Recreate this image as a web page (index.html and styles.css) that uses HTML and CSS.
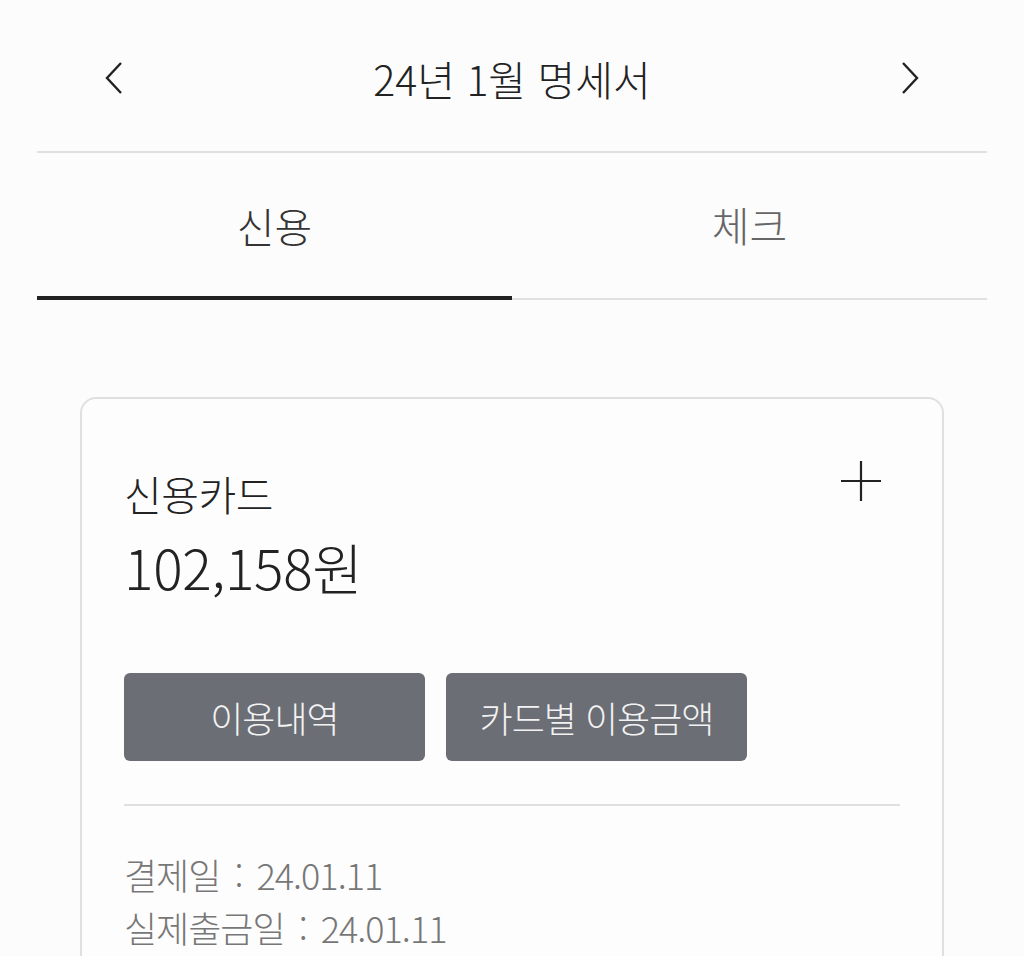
FILE: index.html
```html
<!DOCTYPE html>
<html lang="ko">
<head>
    <meta charset="UTF-8">
    <title>명세서</title>
    <link rel="stylesheet" href="styles.css">
</head>
<body>
    <div class="header">
        <button class="nav-button">
            <svg width="20" height="32" viewBox="0 0 20 32"><path d="M17 1 L3 16 L17 31" fill="none" stroke="#222" stroke-width="2.4"/></svg>
        </button>
        <h1 class="header-title">24년 1월 명세서</h1>
        <button class="nav-button">
            <svg width="20" height="32" viewBox="0 0 20 32"><path d="M3 1 L17 16 L3 31" fill="none" stroke="#222" stroke-width="2.4"/></svg>
        </button>
    </div>

    <div class="tabs">
        <div class="tab active">신용</div>
        <div class="tab">체크</div>
    </div>

    <div class="card">
        <div class="card-head">
            <div class="card-title">신용카드</div>
            <svg class="plus" width="40" height="40" viewBox="0 0 40 40"><path d="M20 0 V40 M0 20 H40" stroke="#222" stroke-width="2.2"/></svg>
        </div>
        <div class="amount">102,158원</div>

        <div class="card-buttons">
            <button class="button">이용내역</button>
            <button class="button">카드별 이용금액</button>
        </div>

        <div class="dates">
            <div>결제일 : 24.01.11</div>
            <div>실제출금일 : 24.01.11</div>
        </div>
    </div>
</body>
</html>
```

FILE: styles.css
```css
:root {
    --line-color: #e0e0e0;
    --text-color: #222222;
    --button-bg: #6b6e75;
}

body {
    margin: 0;
    padding: 0;
    font-family: "Noto Sans CJK KR", "Noto Sans", sans-serif;
    font-weight: 300;
    background-color: #fcfcfc;
    color: var(--text-color);
    overflow: hidden;
}

.header {
    margin: 0 37px;
    padding: 40px 64px 35px 64px;
    height: 76px;
    display: flex;
    align-items: center;
    justify-content: space-between;
    border-bottom: 2px solid var(--line-color);
}

.nav-button {
    width: 26px;
    height: 40px;
    padding: 0;
    border: none;
    background: none;
    display: flex;
    align-items: center;
    justify-content: center;
}

.header-title {
    font-size: 41px;
    font-weight: 300;
    margin: 0;
}

.tabs {
    margin: 0 37px;
    display: flex;
    align-items: flex-end;
    border-bottom: 2px solid var(--line-color);
}

.tab {
    flex: 1;
    height: 141px;
    display: flex;
    align-items: center;
    justify-content: center;
    font-size: 41px;
    color: #666;
    padding-bottom: 4px;
}

.tab.active {
    color: #333;
    height: 143px;
    padding-bottom: 0;
    border-bottom: 4px solid #222;
    margin-bottom: -2px;
}

.card {
    margin: 97px 80px 0 80px;
    padding: 70px 42px 40px 42px;
    border: 2px solid var(--line-color);
    border-radius: 16px;
    background-color: #fdfdfd;
}

.card-head {
    display: flex;
    justify-content: space-between;
    align-items: flex-start;
}

.card-title {
    font-size: 41px;
    line-height: 48px;
    letter-spacing: -0.5px;
}

.plus {
    margin-right: 19px;
    margin-top: -8px;
}

.amount {
    font-size: 55px;
    line-height: 72px;
    letter-spacing: -0.3px;
    margin-top: 13px;
}

.card-buttons {
    display: flex;
    gap: 21px;
    margin-top: 71px;
    padding-bottom: 43px;
    border-bottom: 2px solid var(--line-color);
}

.button {
    width: 301px;
    height: 88px;
    border: none;
    border-radius: 6px;
    background-color: var(--button-bg);
    color: #f2f2f2;
    font-family: inherit;
    font-weight: 300;
    font-size: 36px;
    letter-spacing: -1px;
}

.dates {
    margin-top: 42px;
    font-size: 36px;
    line-height: 53px;
    color: #777;
    letter-spacing: -1px;
    word-spacing: 5px;
}
```
